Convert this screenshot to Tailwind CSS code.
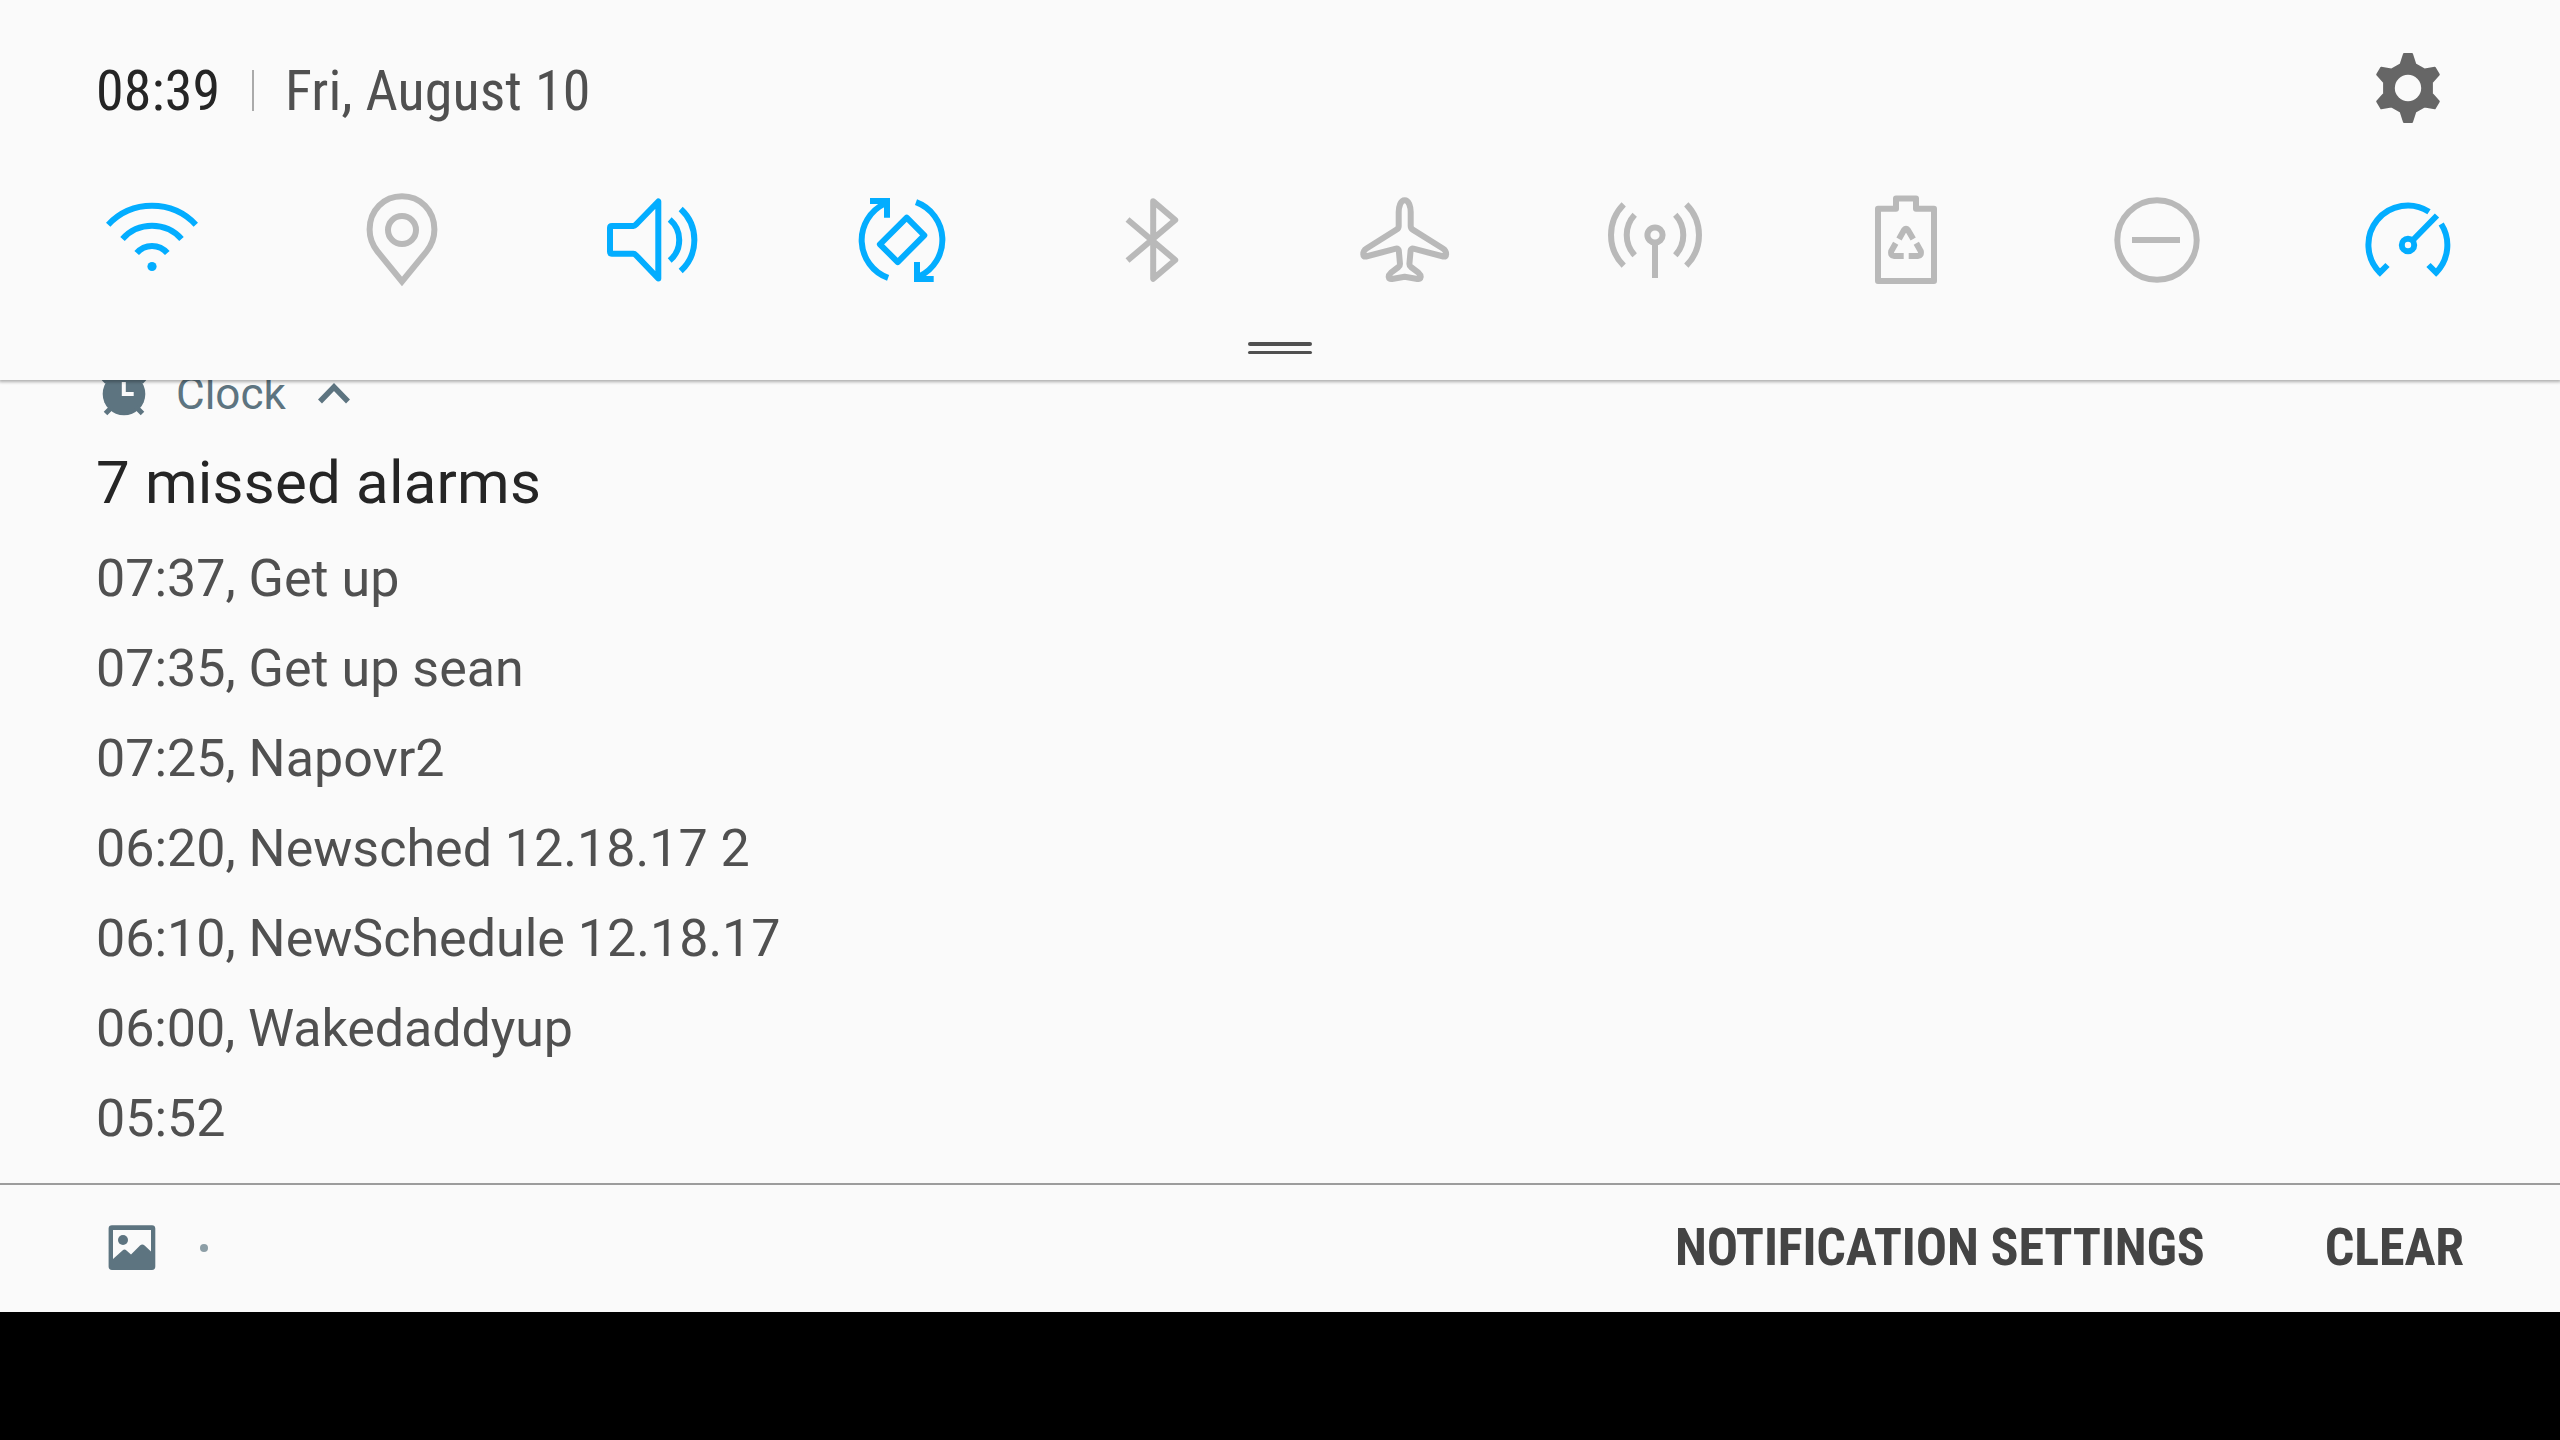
<!DOCTYPE html>
<html lang="en">
<head>
<meta charset="utf-8">
<title>Notifications</title>
<script src="https://cdn.jsdelivr.net/npm/@tailwindcss/browser@4"></script>
</head>
<body class="bg-black">
<main class="flex h-[1440px] w-[2560px] flex-col overflow-hidden bg-black font-['Roboto',sans-serif]">
  <header class="relative z-10 flex h-[380px] shrink-0 flex-col bg-[#fafafa] shadow-[0_1px_3px_1px_rgba(0,0,0,0.3)]">
    <div class="flex h-[180px] items-center justify-between pr-[104px] pl-24">
      <div class="flex items-center font-['Roboto_Condensed','Roboto',sans-serif] text-[56px] leading-[66px] tracking-[0.1px] font-stretch-condensed">
        <span class="w-[156px] pt-[2px] text-[#252525]">08:39</span>
        <span class="h-[41px] w-[2px] bg-[#aaaaaa]"></span>
        <span class="ml-[31px] pt-[2px] text-[#505050]">Fri, August 10</span>
      </div>
      <svg class="size-24" viewBox="2360 42 96 96"><path fill="#666" stroke="#666" stroke-width="2" stroke-linejoin="round" fill-rule="evenodd" d="M2404 54h8l3.4 10.5 9.3 5.1 10.1-1.9 4 6.800-6.900 7.800v11.400l6.900 7.800-4 6.800-10.100-1.900-9.300 5.100-3.400 10.500h-8l-3.400-10.500-9.300-5.100-10.100 1.900-4-6.800 6.900-7.800v-11.400l-6.900-7.800 4-6.800 10.100 1.900 9.300-5.100z"/><circle cx="2408" cy="88" r="13.200" fill="#fafafa"/></svg>
    </div>
    <div class="flex h-[120px] items-center justify-between px-[104px]">
      <svg class="size-24" viewBox="104 192 96 96" fill="none" stroke="#03adff" stroke-width="6"><path d="M108.200 224.700A60.200 60.200 0 0 1 195.800 224.700M122.500 239A39.600 39.600 0 0 1 181.500 239M136.700 253A20 20 0 0 1 167.300 253"/><circle cx="152" cy="266.500" r="4.600" fill="#03adff" stroke="none"/></svg>
      <svg class="size-24" viewBox="355 192 96 96" fill="none" stroke="#b9b9b9" stroke-width="6"><path d="M402 281.500L377.500 251.500C372 244.500 369.600 238 369.600 229.500C369.600 210 384 196.200 402 196.200S434.400 210 434.400 229.500C434.400 238 432 244.500 426.500 251.500Z"/><circle cx="402" cy="230" r="14"/></svg>
      <svg class="size-24" viewBox="605 192 96 96" fill="none" stroke="#03adff" stroke-width="6" stroke-linejoin="round"><path d="M612 226H633.500Q634.600 226 636 224.500L658.300 201.500V278.500L636 255.200Q634.600 253.700 633.500 253.700H612Q610 253.700 610 251.700V228Q610 226 612 226ZM669.700 219.500A26.800 26.800 0 0 1 669.700 260.500M680.700 209A42 42 0 0 1 680.700 271"/></svg>
      <svg class="size-24" viewBox="856 192 96 96" fill="none" stroke="#03adff" stroke-width="6"><path d="M888.100 277.900A40.300 40.300 0 0 1 884.800 203.600M870 201H887V217.700M916 202.100A40.300 40.300 0 0 1 919.200 276.400M917 262V279H933.700"/><path stroke-linejoin="round" d="M906.700 217.700L924.300 235.300L897.700 262.100L879.900 244.300Z"/></svg>
      <svg class="size-24" viewBox="1107 192 96 96" fill="none" stroke="#b9b9b9" stroke-width="6" stroke-linejoin="round"><path d="M1127.500 219.500L1175.200 260L1153.200 278.700V201.300L1175.200 220L1127.500 260.500"/></svg>
      <svg class="size-24" viewBox="1357 192 96 96" fill="none" stroke="#b9b9b9" stroke-width="6" stroke-linejoin="round"><path d="M1404.700 200.300C1400.500 200.300 1398.700 207 1398.700 212V226Q1398.700 228.300 1396.700 229.600L1366.500 248.500Q1363.300 250.500 1363.300 254V254.500Q1363.300 257 1366 256.500L1396 248.700Q1398.500 248.200 1398.800 250.500L1400 264Q1400 266 1398.500 267L1391 272.700Q1388.500 275 1388.700 277Q1389 279.500 1392 279L1404.700 276.800L1417.400 279Q1420.400 279.500 1420.700 277Q1420.900 275 1418.400 272.700L1410.900 267Q1409.400 266 1409.400 264L1410.600 250.500Q1410.900 248.200 1413.400 248.700L1443.400 256.500Q1446.100 257 1446.100 254.500V254Q1446.100 250.500 1442.900 248.500L1412.700 229.600Q1410.700 228.300 1410.700 226V212C1410.700 207 1408.900 200.300 1404.700 200.300Z"/></svg>
      <svg class="size-24" viewBox="1608 192 96 96" fill="none" stroke="#b9b9b9" stroke-width="6"><circle cx="1655" cy="235" r="7.600"/><path d="M1655 243V278M1634.700 214.700A29.800 29.800 0 0 0 1634.700 255.300M1623.700 204.300A43.500 43.500 0 0 0 1623.700 265.700M1675.300 214.700A29.800 29.800 0 0 1 1675.300 255.300M1686.300 204.300A43.500 43.500 0 0 1 1686.300 265.700"/></svg>
      <svg class="size-24" viewBox="1859 192 96 96" fill="none" stroke="#b9b9b9" stroke-width="6" stroke-linejoin="round"><path d="M1878 208.700H1896V198.500H1916V208.700H1934V281H1878Z"/><path d="M1899 239L1904.200 229.800Q1906 227.500 1907.800 229.800L1913.200 239M1895.700 243.200L1891.200 251.200Q1890.500 256 1894 256H1903.700M1916.300 243.200L1920.800 251.200Q1921.500 256 1918 256H1908.700"/></svg>
      <svg class="size-24" viewBox="2109 192 96 96" fill="none" stroke="#b9b9b9" stroke-width="6"><circle cx="2157" cy="240" r="39.700"/><path d="M2132 240H2180"/></svg>
      <svg class="size-24" viewBox="2360 192 96 96" fill="none" stroke="#03adff" stroke-width="6"><circle cx="2408" cy="245" r="6.200"/><path d="M2412.500 240.500L2437 215.500M2387.500 265L2379.900 272.600A39.300 39.300 0 0 1 2429 211.800M2441.200 224A39.300 39.300 0 0 1 2436.100 272.600L2428.500 265"/></svg>
    </div>
    <div class="mx-auto mt-[42px] flex h-3 w-16 flex-col justify-between">
      <span class="h-[3.5px] rounded-full bg-[#505050]"></span>
      <span class="h-[3.5px] rounded-full bg-[#505050]"></span>
    </div>
  </header>
  <section class="flex h-[803px] shrink-0 flex-col bg-[#fafafa] px-24">
    <div class="flex h-[60px] items-start text-[44px] text-[#5d7480]">
      <svg class="h-[60px] w-20" viewBox="96 380 80 60" fill="none"><circle cx="124" cy="394" r="21.300" fill="#5d7480"/><path stroke="#5d7480" stroke-width="5" d="M112 407L105.500 413.500M136 407L142.500 413.500M111 375L103.500 382M137 375L144.500 382"/><path stroke="#fafafa" stroke-width="4" d="M123.800 382V394H133.700"/></svg>
      <span class="-mt-[12px] w-[140px] leading-[52px]">Clock</span>
      <svg class="h-[60px] w-10" viewBox="316 380 40 60" fill="none" stroke="#5d7480" stroke-width="5.500"><path d="M320 401.500L334 387L348 401.500"/></svg>
    </div>
    <h1 class="mt-[8px] text-[60px] leading-[70px] tracking-[0.2px] text-[#252525]">7 missed alarms</h1>
    <ul class="mt-[16px] text-[52px] leading-[90px] text-[#505050]">
      <li>07:37, Get up</li>
      <li>07:35, Get up sean</li>
      <li>07:25, Napovr2</li>
      <li>06:20, Newsched 12.18.17 2</li>
      <li>06:10, NewSchedule 12.18.17</li>
      <li class="tracking-[-0.08px]">06:00, Wakedaddyup</li>
      <li>05:52</li>
    </ul>
  </section>
  <footer class="flex h-[129px] shrink-0 items-center justify-between border-t-2 border-[#9c9c9c] bg-[#fafafa] px-24 pb-[2px]">
    <svg class="h-[60px] w-[120px]" viewBox="96 1218 120 60"><path fill="#5d7480" fill-rule="evenodd" d="M112 1225.300H152A3.400 3.400 0 0 1 155.300 1228.600V1266.600A3.400 3.400 0 0 1 152 1270H112A3.400 3.400 0 0 1 108.600 1266.600V1228.600A3.400 3.400 0 0 1 112 1225.300ZM113 1230V1259L122.500 1250.500Q124.500 1248.500 126.500 1250.500L131 1254.500L140 1245.500Q142.300 1243.500 144.600 1245.500L151 1251.500V1230Z"/><circle cx="123" cy="1240" r="5" fill="#5d7480"/><circle cx="204" cy="1248" r="4" fill="#8c9ea6"/></svg>
    <div class="flex gap-[120px] font-['Roboto_Condensed','Roboto',sans-serif] text-[52px] leading-[62px] font-bold tracking-[-0.13px] text-[#444] font-stretch-condensed">
      <span>NOTIFICATION SETTINGS</span>
      <span>CLEAR</span>
    </div>
  </footer>
</main>
</body>
</html>
